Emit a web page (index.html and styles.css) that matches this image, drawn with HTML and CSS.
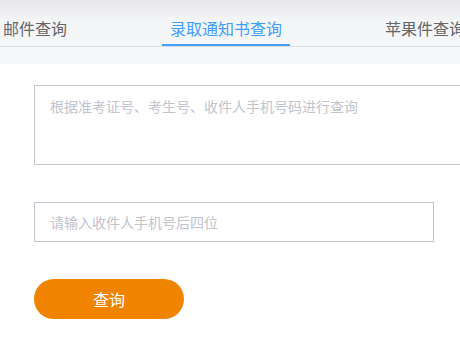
FILE: index.html
```html
<!DOCTYPE html>
<html lang="zh-CN">
<head>
  <meta charset="UTF-8">
  <meta name="viewport" content="width=device-width, initial-scale=1.0">
  <title>录取通知书查询</title>
  <link rel="stylesheet" href="styles.css">
</head>
<body>

  <div class="topo">
    <div class="abas">
      <div class="aba">邮件查询</div>
      <div class="aba ativa">录取通知书查询</div>
      <div class="aba">苹果件查询</div>
    </div>
  </div>

  <form class="consulta" onsubmit="return false;">
    <textarea class="campo-grande" placeholder="根据准考证号、考生号、收件人手机号码进行查询"></textarea>
    <input class="campo" type="text" placeholder="请输入收件人手机号后四位">
    <button class="botao" type="submit">查询</button>
  </form>

</body>
</html>
```

FILE: styles.css
```css
* {
  box-sizing: border-box;
}

body {
  margin: 0;
  font-family: "Noto Sans CJK SC", "Microsoft YaHei", sans-serif;
  background: #fff;
  overflow: hidden;
  color: #606266;
}

.topo {
  background: #f5f6f8;
  padding-bottom: 17px;
}

.abas {
  display: flex;
  gap: 87px;
  height: 47px;
  margin-left: -5px;
  border-bottom: 1px solid #dcdfe6;
  background: linear-gradient(#e6e6e8, #f4f5f7 45%, #f5f6f8);
  white-space: nowrap;
}

.aba {
  flex-shrink: 0;
  padding: 12px 8px 0;
  height: 46px;
  font-size: 16px;
  line-height: 32px;
  color: #666;
  border-bottom: 2px solid transparent;
}

.aba.ativa {
  color: #409eff;
  border-bottom-color: #409eff;
}

.consulta {
  display: flex;
  flex-direction: column;
  align-items: flex-start;
  gap: 37px;
  padding: 21px 0 0 34px;
}

.campo-grande,
.campo {
  font-family: inherit;
  font-size: 14px;
  border: 1px solid #c0c4cc;
  border-radius: 0;
  outline: none;
  color: #606266;
  background: #fff;
}

.campo-grande {
  width: 460px;
  height: 80px;
  padding: 10px 15px;
  line-height: 20px;
  resize: none;
}

.campo {
  width: 400px;
  height: 40px;
  padding: 0 15px;
}

.campo-grande::placeholder,
.campo::placeholder {
  color: #c0c4cc;
}

.botao {
  width: 150px;
  height: 40px;
  border: none;
  border-radius: 20px;
  background: #f08300;
  color: #fff;
  font-family: inherit;
  font-size: 16px;
  cursor: pointer;
}
```
